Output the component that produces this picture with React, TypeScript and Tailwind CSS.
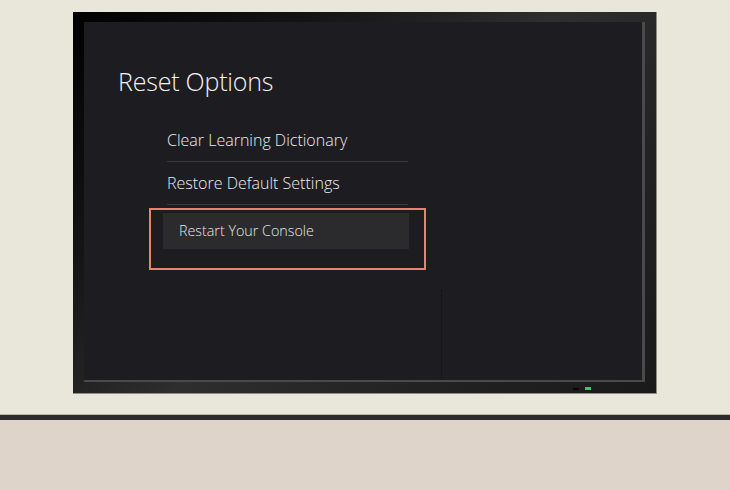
import React from "react";

export default function App() {
  const font = { fontFamily: '"Open Sans", "Noto Sans", sans-serif' };
  return (
    <div className="w-[730px] h-[490px] bg-[#e9e6da] flex flex-col overflow-hidden" style={font}>
      <div className="h-[414px] pt-[12px] pl-[73px]">
        <div className="relative w-[584px] h-[382px] bg-[linear-gradient(135deg,#000000_0%,#141414_25%,#2e2e2e_50%,#222222_75%,#1a1a1a_100%)] border-r border-b border-[#8d8d88] pt-[10px] pl-[11px]">
          <div className="relative w-[561px] h-[360px] bg-[#1d1d21] border-r-[3px] border-b-[2px] border-[#4a4a4a] pt-[44px] pl-[34px]">
            <div className="text-[25px] leading-[30px] text-[#f2f2f2] font-light tracking-[-0.2px]">Reset Options</div>
            <div className="mt-[23px] pl-[49px] w-[290px] flex flex-col">
              <div className="h-[43px] border-b border-[#3a3a3e] flex items-center text-[16px] text-[#ececec] font-light">
                Clear Learning Dictionary
              </div>
              <div className="h-[43px] border-b border-[#3a3a3e] flex items-center text-[16px] text-[#ececec] font-light">
                Restore Default Settings
              </div>
              <div className="relative mt-[8px] -ml-[4px] w-[246px] h-[36px] bg-[#2b2b2d] flex items-center pl-[16px] text-[14.3px] text-[#e6e6e6] font-light">
                Restart Your Console
                <div className="absolute -left-[14px] -top-[5px] w-[277px] h-[62px] border-2 border-[#e8836f]" />
              </div>
            </div>
            <div className="absolute left-[357px] top-[268px] h-[90px] border-l border-dotted border-[#111114]" />
          </div>
          <div className="absolute left-[500px] top-[376px] w-[6px] h-[2px] bg-[#050505]" />
          <div className="absolute left-[512px] top-[375px] w-[6px] h-[3px] bg-[#3cc85a]" />
        </div>
      </div>
      <div className="h-[1px] bg-[#b9b5aa]" />
      <div className="h-[5px] bg-[#2c2c2c]" />
      <div className="flex-1 bg-[#dfd4c9]" />
    </div>
  );
}
